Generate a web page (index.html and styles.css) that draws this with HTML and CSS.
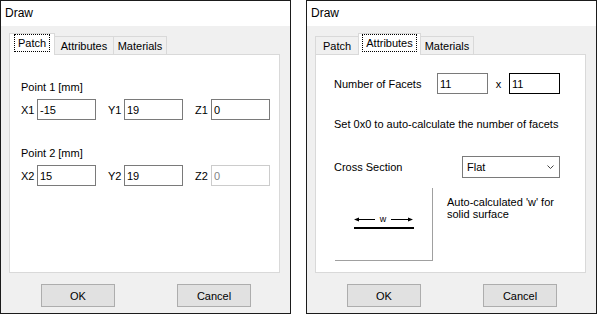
FILE: index.html
```html
<!DOCTYPE html>
<html lang="en">
<head>
    <meta charset="UTF-8">
    <meta name="viewport" content="width=device-width, initial-scale=1.0">
    <title>Draw</title>
    <link rel="stylesheet" href="styles.css">
</head>
<body>
    <div class="desktop">
        <!-- Patch tab dialog -->
        <div class="window">
            <div class="titlebar">Draw</div>
            <div class="window-body">
                <div class="tabs">
                    <div class="tab tab-patch active"><span class="focus">Patch</span></div>
                    <div class="tab tab-attr">Attributes</div>
                    <div class="tab tab-mat">Materials</div>
                </div>
                <div class="panel panel-patch">
                    <div class="group-label">Point 1 [mm]</div>
                    <div class="coord-row">
                        <div class="coord"><span class="coord-label">X1</span><input class="field" type="text" value="-15"></div>
                        <div class="coord"><span class="coord-label">Y1</span><input class="field" type="text" value="19"></div>
                        <div class="coord"><span class="coord-label">Z1</span><input class="field" type="text" value="0"></div>
                    </div>
                    <div class="group-label second">Point 2 [mm]</div>
                    <div class="coord-row">
                        <div class="coord"><span class="coord-label">X2</span><input class="field" type="text" value="15"></div>
                        <div class="coord"><span class="coord-label">Y2</span><input class="field" type="text" value="19"></div>
                        <div class="coord"><span class="coord-label">Z2</span><input class="field" type="text" value="0" disabled></div>
                    </div>
                </div>
                <div class="buttons">
                    <button class="btn">OK</button>
                    <button class="btn">Cancel</button>
                </div>
            </div>
        </div>

        <!-- Attributes tab dialog -->
        <div class="window">
            <div class="titlebar">Draw</div>
            <div class="window-body">
                <div class="tabs">
                    <div class="tab tab-patch">Patch</div>
                    <div class="tab tab-attr active"><span class="focus">Attributes</span></div>
                    <div class="tab tab-mat">Materials</div>
                </div>
                <div class="panel panel-attr">
                    <div class="facets-row">
                        <span class="facets-label">Number of Facets</span>
                        <input class="field small" type="text" value="11">
                        <span class="times">x</span>
                        <input class="field small focused" type="text" value="11">
                    </div>
                    <div class="hint">Set 0x0 to auto-calculate the number of facets</div>
                    <div class="cross-row">
                        <span class="cross-label">Cross Section</span>
                        <div class="select">
                            <span>Flat</span>
                            <svg class="chevron" width="7" height="5" viewBox="0 0 7 5">
                                <polyline points="0.5,0.5 3.5,3.5 6.5,0.5" fill="none" stroke="#444" stroke-width="1"/>
                            </svg>
                        </div>
                    </div>
                    <div class="figure-row">
                        <div class="figure-box">
                            <svg width="97" height="72" viewBox="0 0 97 72">
                                <line x1="21" y1="31.5" x2="40" y2="31.5" stroke="#000" stroke-width="1"/>
                                <polygon points="19,31.5 24,29.5 24,33.5" fill="#000"/>
                                <text x="48" y="34" font-family="Liberation Sans, Arial, sans-serif" font-size="9" text-anchor="middle">w</text>
                                <line x1="56" y1="31.5" x2="76" y2="31.5" stroke="#000" stroke-width="1"/>
                                <polygon points="78,31.5 73,29.5 73,33.5" fill="#000"/>
                                <rect x="19" y="39" width="60" height="2" fill="#000"/>
                            </svg>
                        </div>
                        <div class="figure-note">Auto-calculated 'w' for<br>solid surface</div>
                    </div>
                </div>
                <div class="buttons">
                    <button class="btn">OK</button>
                    <button class="btn">Cancel</button>
                </div>
            </div>
        </div>
    </div>
</body>
</html>
```

FILE: styles.css
```css
body {
    margin: 0;
    background-color: #fff;
    font-family: "Liberation Sans", Arial, sans-serif;
    font-size: 11px;
    color: #000;
}
.desktop {
    display: flex;
    gap: 15px;
}
.window {
    box-sizing: border-box;
    width: 291px;
    height: 314px;
    border: 1px solid #1b1b1b;
    background-color: #f0f0f0;
    display: flex;
    flex-direction: column;
}
.titlebar {
    height: 25px;
    line-height: 25px;
    padding-left: 4px;
    background-color: #fff;
    font-size: 12px;
}
.window-body {
    display: flex;
    flex-direction: column;
    padding: 7px 10px 0 8px;
}

/* Tabs */
.tabs {
    display: flex;
    align-items: flex-end;
    height: 21px;
}
.tab {
    box-sizing: border-box;
    height: 18px;
    border: 1px solid #d9d9d9;
    border-bottom: none;
    background-color: #f0f0f0;
    display: flex;
    align-items: center;
    justify-content: center;
    margin-left: -1px;
}
.tab:first-child {
    margin-left: 0;
}
.tab-patch { width: 44px; }
.tab-attr { width: 60px; }
.tab-mat { width: 54px; }
.tab.active {
    height: 22px;
    margin-bottom: -1px;
    background-color: #fff;
    position: relative;
    z-index: 1;
    padding-bottom: 3px;
}
.tab-patch.active { width: 46px; }
.tab-attr.active { width: 63px; }
.focus {
    outline: 1px dotted #000;
    outline-offset: 2px;
    padding: 0 1px;
}

/* Panel */
.panel {
    box-sizing: border-box;
    height: 219px;
    border: 1px solid #d9d9d9;
    background-color: #fff;
}
.panel-patch {
    padding: 25px 0 0 11px;
}
.group-label {
    line-height: 14px;
    margin-bottom: 5px;
}
.group-label.second {
    margin-top: 26px;
}
.coord-row {
    display: flex;
    gap: 12px;
}
.coord {
    display: flex;
    align-items: center;
}
.coord-label {
    width: 16px;
}
.field {
    box-sizing: border-box;
    width: 59px;
    height: 21px;
    margin: 0;
    padding: 0 2px;
    border: 1px solid #7a7a7a;
    background-color: #fff;
    font-family: inherit;
    font-size: 11px;
    color: #000;
    outline: none;
}
.field:disabled {
    border-color: #cccccc;
    color: #838383;
}
.field.small {
    width: 51px;
}
.field.focused {
    border-color: #000;
}

.panel-attr {
    padding: 18px 0 0 18px;
}
.facets-row {
    display: flex;
    align-items: center;
}
.facets-label {
    width: 103px;
}
.times {
    width: 21px;
    text-align: center;
}
.hint {
    margin-top: 23px;
    line-height: 14px;
}
.cross-row {
    display: flex;
    align-items: center;
    margin-top: 25px;
}
.cross-label {
    width: 128px;
}
.select {
    box-sizing: border-box;
    width: 98px;
    height: 22px;
    border: 1px solid #7a7a7a;
    display: flex;
    align-items: center;
    justify-content: space-between;
    padding: 0 5px 0 4px;
}
.chevron {
    display: block;
}
.figure-row {
    display: flex;
    margin-top: 10px;
}
.figure-box {
    width: 97px;
    height: 72px;
    margin-left: 1px;
    border-right: 1px solid #a0a0a0;
    border-bottom: 1px solid #a0a0a0;
}
.figure-box svg {
    display: block;
}
.figure-note {
    margin-left: 14px;
    padding-top: 8px;
    line-height: 12px;
}

/* Buttons */
.buttons {
    display: flex;
    gap: 62px;
    margin-top: 11px;
    padding-left: 32px;
}
.btn {
    box-sizing: border-box;
    width: 74px;
    height: 23px;
    margin: 0;
    border: 1px solid #adadad;
    background-color: #e1e1e1;
    font-family: inherit;
    font-size: 11px;
    color: #000;
    padding: 0;
}
```
